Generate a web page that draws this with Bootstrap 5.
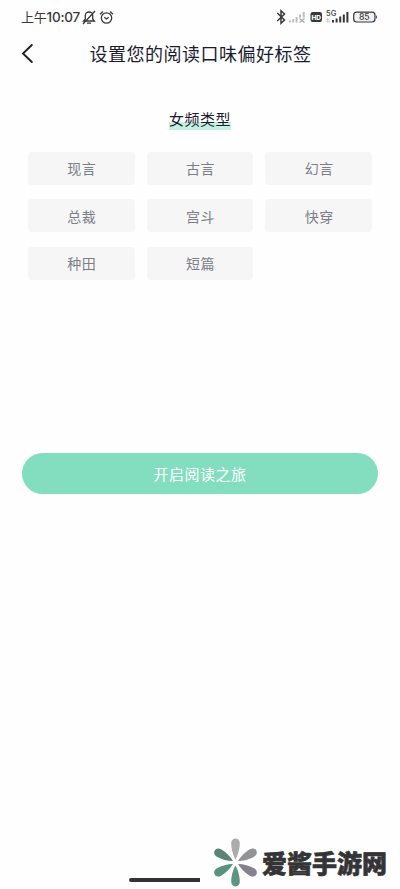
<!DOCTYPE html>
<html lang="zh-CN">
<head>
<meta charset="utf-8">
<meta name="viewport" content="width=device-width, initial-scale=1">
<title>设置您的阅读口味偏好标签</title>
<link href="https://cdn.jsdelivr.net/npm/bootstrap@5.3.0/dist/css/bootstrap.min.css" rel="stylesheet">
<style>
body{font-family:"Noto Sans CJK SC",sans-serif;color:#1c1c30;background:#fefefe;overflow:hidden}
.screen{height:889px;line-height:1}
.status{height:34px;padding:0 21px;color:#38383c}
.clock{font-size:13px;font-weight:400;letter-spacing:-.2px;white-space:nowrap;width:61px;padding-top:1px}
.clock-digits{font-family:Inter,sans-serif;font-size:13.5px;font-weight:500;letter-spacing:-.25px}
.topbar{height:38px;padding-left:20px;padding-right:20px}
.topbar h1{font-size:18px;letter-spacing:.5px;font-weight:400;padding-right:14px;padding-top:1px}
.group-title{font-size:15px;letter-spacing:.5px;font-weight:400;height:19px;margin-top:39px;line-height:16px;background:linear-gradient(transparent 11px,#c4f0e1 11px)}
.tags{padding:0 28px;margin-top:21.5px;display:grid;grid-template-columns:repeat(3,1fr);gap:14.5px 12px}
.tag{height:33px;background:#f6f6f7;color:#7d7d88;font-size:14px;letter-spacing:.5px;border:0;border-radius:4px;padding:0 0 0 1px;line-height:1}
.start{height:41px;margin:173px 22px 0;background:#82debf;color:#fff;font-size:15px;letter-spacing:.5px;padding:0;line-height:1}
.bottom{height:54px;padding-right:13px}
.homebar{width:71px;height:4px;border-radius:2px 0 0 2px;background:#333335;margin:0 14px 7px 0}
.brand{font-size:25px;font-weight:900;color:#343436;-webkit-text-stroke:.6px #343436;white-space:nowrap;margin-left:5px}
</style>
<script src="https://cdn.jsdelivr.net/npm/bootstrap@5.3.0/dist/js/bootstrap.bundle.min.js"></script>
</head>
<body>
<main class="screen d-flex flex-column">
  <div class="status d-flex align-items-center justify-content-between">
    <div class="d-flex align-items-center">
      <span class="clock">上午<span class="clock-digits">10:07</span></span>
      <svg width="14" height="15" viewBox="0 0 14 15" fill="none" stroke="currentColor" stroke-width="1.300"><path d="M1.500 11h10.800L10.700 9V5.500C10.700 3.200 9.100 2 7 2S3.300 3.200 3.300 5.500V9zM5 13.200h4M13 1 1 14"/></svg>
      <svg width="15" height="15" viewBox="0 0 15 15" fill="none" stroke="currentColor" stroke-width="1.300" style="margin-left:3px"><circle cx="7.500" cy="8" r="5.200"/><path d="M1 4.200 4 1.500M14 4.200l-3-2.700M5.300 7.200l2.200 1.800 2.200-1.800"/></svg>
    </div>
    <svg width="103" height="18" viewBox="276 8.500 103 18" fill="currentColor" font-family="Inter,sans-serif">
      <path d="m277.300 13.500 7.200 7-3.500 3.200V11.300l3.500 3.200-7.200 7" fill="none" stroke="currentColor" stroke-width="1.500"/>
      <g fill="#bdbdbf"><path d="M289 21h2v2h-2zM292.200 19.500h2V23h-2zM295.600 17.500h2V23h-2zM299 15h2v3h-2zM302.700 12.500h2V18h-2z"/><path d="m299.500 19 5 4m0-4-5 4" stroke="#aaaaad" stroke-width="1.200"/></g>
      <rect x="310.500" y="12.500" width="11.500" height="10" rx="2.200"/>
      <text x="316.200" y="20" font-size="6.500" font-weight="800" fill="#fff" text-anchor="middle">HD</text>
      <text x="326" y="16.500" font-size="7.500" font-weight="500">5G</text>
      <path d="m326 20.500 1.500-1.500v4m1.500-4v4l1.500-1.500" fill="none" stroke="#c0c0c2" stroke-width=".8"/>
      <path d="M332 20.500h2V23h-2zM335.600 19h2v4h-2zM339.200 17h2v6h-2zM342.800 15h2v8h-2zM346.400 12.500h2V23h-2z"/>
      <rect x="353.700" y="12.700" width="21.300" height="9.800" rx="3" fill="#f0f0f0" stroke="currentColor" stroke-width="1.200"/>
      <path d="M376.200 15.800q2 1.700 0 3.700z"/>
      <text x="364.300" y="20.700" font-size="8.500" font-weight="500" text-anchor="middle">85</text>
    </svg>
  </div>
  <header class="topbar d-flex align-items-center">
    <svg width="15" height="20" viewBox="0 0 15 20" fill="none" stroke="#202026" stroke-width="1.900" stroke-linecap="round"><path d="M11.800 2 3 10.500l8.800 8.500"/></svg>
    <h1 class="flex-grow-1 text-center mb-0">设置您的阅读口味偏好标签</h1>
  </header>
  <h2 class="group-title align-self-center mb-0">女频类型</h2>
  <section class="tags">
    <button class="btn tag">现言</button><button class="btn tag">古言</button><button class="btn tag">幻言</button>
    <button class="btn tag">总裁</button><button class="btn tag">宫斗</button><button class="btn tag">快穿</button>
    <button class="btn tag">种田</button><button class="btn tag">短篇</button>
  </section>
  <button class="btn rounded-pill start">开启阅读之旅</button>
  <footer class="bottom d-flex justify-content-end align-items-center mt-auto">
    <div class="homebar align-self-end"></div>
    <svg width="43" height="49" viewBox="0 0 43 49">
      <defs><path id="petal" d="M21.500 21.500C19.300 18 17.200 11 17.200 5.500c-.1-6.700 8.700-6.700 8.600 0C25.800 11 23.700 18 21.500 21.500z"/></defs>
      <use href="#petal" fill="#acacae"/>
      <use href="#petal" transform="rotate(60 21.500 24.500)" fill="#929294"/>
      <use href="#petal" transform="rotate(120 21.500 24.500)" fill="#85828e"/>
      <use href="#petal" transform="rotate(180 21.500 24.500)" fill="#5c9682"/>
      <use href="#petal" transform="rotate(240 21.500 24.500)" fill="#5a927f"/>
      <use href="#petal" transform="rotate(300 21.500 24.500)" fill="#5c8378"/>
    </svg>
    <span class="brand">爱酱手游网</span>
  </footer>
</main>
</body>
</html>
